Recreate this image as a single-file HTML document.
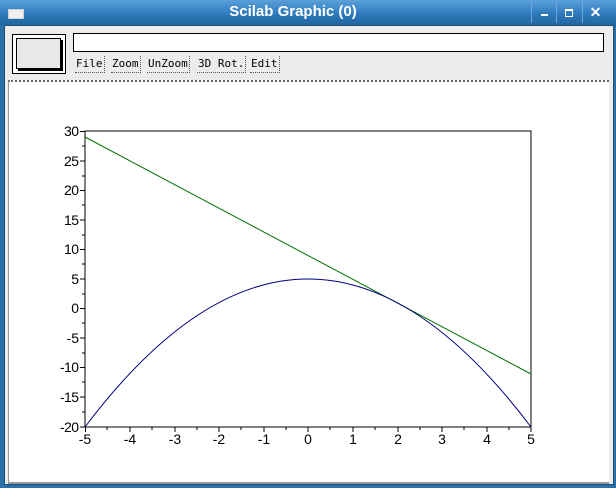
<!DOCTYPE html>
<html><head><style>
body{margin:0;width:616px;height:488px;overflow:hidden;background:#2a6fa8;font-family:"Liberation Sans",sans-serif;position:relative}
.title{position:absolute;left:0;top:0;width:616px;height:25px;background:linear-gradient(#5aa0da,#2b77b9 60%,#22679f)}
.title .t{position:absolute;left:0;width:586px;top:3px;text-align:center;color:#fff;font-weight:bold;font-size:15px}
.ic{position:absolute;left:8px;top:9px;width:14px;height:8px;background:#f0f0f0;border:1px solid #d0d0d0}
.bt{position:absolute;top:1px;width:25px;height:22px;border-left:1px solid #6aa6d8}
.win{position:absolute;left:4px;top:25px;width:608px;height:458px;background:#ececec;border:1px solid #1e4f7a}
.big{position:absolute;left:7px;top:8px;width:52px;height:38px;border:1px solid #000;background:#fff}
.big div{position:absolute;left:3px;top:3px;width:43px;height:29px;background:#e8e8e8;border:1px solid #000;box-shadow:2px 2px 0 #000}
.fld{position:absolute;left:68px;top:7px;width:529px;height:17px;border:1px solid #000;background:#fff}
.m{position:absolute;top:30px;height:16px;font-family:"DejaVu Sans Mono","Liberation Mono",monospace;font-size:11px;line-height:16px;padding:0 1px;border-right:1px dotted #555;border-bottom:1px dotted #555}
.plot{position:absolute;left:3px;top:54px;width:600px;height:400px;background:#fff;border-top:2px dotted #666;border-bottom:2px solid #999;border-left:1px solid #999}
svg{position:absolute;left:0;top:0}
</style></head><body>
<div class="title"><div class="ic"></div><div class="t">Scilab Graphic (0)</div>
<div class="bt" style="left:531px"><div style="position:absolute;left:9px;top:13px;width:7px;height:2px;background:#fff"></div></div>
<div class="bt" style="left:556px"><div style="position:absolute;left:8px;top:8px;width:6px;height:5px;border:1px solid #fff;border-top-width:2px"></div></div>
<div class="bt" style="left:582px;color:#fff;font-weight:bold;text-align:center;line-height:22px;font-size:14px">✕</div></div>
<div class="win">
<div class="big"><div></div></div>
<div class="fld"></div>
<div class="m" style="left:70px">File</div>
<div class="m" style="left:106px">Zoom</div>
<div class="m" style="left:142px">UnZoom</div>
<div class="m" style="left:192px">3D Rot.</div>
<div class="m" style="left:245px">Edit</div>
<div class="plot"></div>
</div>
<svg width="616" height="488" font-family="Liberation Sans,sans-serif" font-size="14">
<rect x="85" y="131" width="446" height="296" fill="none" stroke="#000"/>
<g stroke="#000">
<path d="M80 131.5h5M80 161h5M80 190.5h5M80 220h5M80 249.5h5M80 279h5M80 308.5h5M80 338h5M80 367.5h5M80 397h5M80 427h5"/>
<path d="M82 146h3M82 176h3M82 205h3M82 235h3M82 264h3M82 294h3M82 323h3M82 353h3M82 382h3M82 412h3"/>
<path d="M85.5 427v5M130 427v5M175 427v5M219 427v5M264 427v5M308 427v5M353 427v5M398 427v5M442 427v5M487 427v5M531 427v5"/>
<path d="M107 427v3M152 427v3M197 427v3M241 427v3M286 427v3M330 427v3M375 427v3M420 427v3M464 427v3M509 427v3"/>
</g>
<g text-anchor="end">
<text x="79" y="136" textLength="15">30</text><text x="79" y="166" textLength="15">25</text><text x="79" y="195" textLength="15">20</text><text x="79" y="225" textLength="15">15</text><text x="79" y="254" textLength="15">10</text><text x="79" y="284">5</text><text x="79" y="313">0</text><text x="79" y="343">-5</text><text x="79" y="372" textLength="19">-10</text><text x="79" y="402" textLength="19">-15</text><text x="79" y="432" textLength="19">-20</text>
</g>
<g text-anchor="middle">
<text x="85" y="444">-5</text><text x="130" y="444">-4</text><text x="175" y="444">-3</text><text x="219" y="444">-2</text><text x="264" y="444">-1</text><text x="308" y="444">0</text><text x="353" y="444">1</text><text x="398" y="444">2</text><text x="442" y="444">3</text><text x="487" y="444">4</text><text x="531" y="444">5</text>
</g>
<line x1="85" y1="137" x2="531" y2="374" stroke="#007000"/>
<path d="M85 427Q308 131 531 427" fill="none" stroke="#000080"/>
</svg>
</body></html>
